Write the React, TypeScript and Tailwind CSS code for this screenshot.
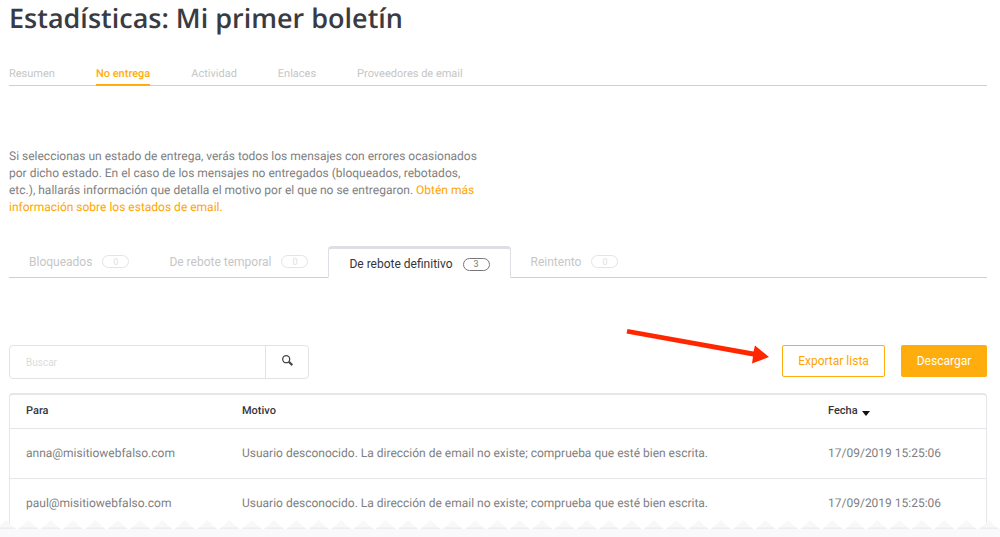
import { ReactNode } from "react";

const sections = ["Resumen", "No entrega", "Actividad", "Enlaces", "Proveedores de email"];

const states = [
  { label: "Bloqueados", count: 0 },
  { label: "De rebote temporal", count: 0 },
  { label: "De rebote definitivo", count: 3 },
  { label: "Reintento", count: 0 },
];

const reason = "Usuario desconocido. La dirección de email no existe; comprueba que esté bien escrita.";

const rows = [
  { email: "anna@misitiowebfalso.com", reason, date: "17/09/2019 15:25:06" },
  { email: "paul@misitiowebfalso.com", reason, date: "17/09/2019 15:25:06" },
];

function SectionNav() {
  return (
    <nav className="mt-7 flex h-[22px] gap-[41px] border-b border-[#cfcfcf] text-[11px] leading-5">
      {sections.map((name) => (
        <a
          key={name}
          href="#"
          className={
            name === "No entrega"
              ? "-mb-px border-b-2 border-[#fead0d] font-medium text-[#fead0d]"
              : "text-[#c6c6c6]"
          }
        >
          {name}
        </a>
      ))}
    </nav>
  );
}

function StateTab({ label, count }: { label: string; count: number }) {
  const active = count > 0;
  return (
    <button
      type="button"
      role="tab"
      aria-selected={active}
      className={
        active
          ? "-mb-px flex h-8 items-center gap-2.5 rounded-t-sm border border-t-3 border-[#dedee5] border-b-white bg-white px-5 pt-0.5 text-[#33343c]"
          : "flex h-[31px] items-center gap-2.5 px-5 text-[#c6c6c6]"
      }
    >
      {label}
      <span
        className={
          active
            ? "flex h-[13px] w-[27px] items-center justify-center rounded-full border border-[#777] text-[9px] text-[#777]"
            : "flex h-[13px] w-[27px] items-center justify-center rounded-full border border-[#e4e4e8] text-[9px] text-[#e0e0e4]"
        }
      >
        {count}
      </span>
    </button>
  );
}

function SearchBox() {
  return (
    <form className="flex h-[34px] w-[300px] rounded-sm border border-[#e3e3e7]" onSubmit={(e) => e.preventDefault()}>
      <input
        type="search"
        aria-label="Buscar"
        placeholder="Buscar"
        className="min-w-0 flex-1 px-4 text-[10px] outline-none placeholder:text-[#dcdcdc]"
      />
      <button
        type="submit"
        aria-label="Buscar mensajes"
        className="flex w-[43px] items-center justify-center border-l border-[#e3e3e7] pb-1"
      >
        <svg width="11" height="11" viewBox="0 0 11 11" fill="none" stroke="#444">
          <circle cx="4.2" cy="4.2" r="3.5" strokeWidth="1.3" />
          <path d="M6.8 6.8 10.3 10.1" strokeWidth="2.2" />
        </svg>
      </button>
    </form>
  );
}

function HeadCell({ children }: { children: ReactNode }) {
  return <th className="px-4 text-left text-[11px] font-medium text-[#33343c]">{children}</th>;
}

function MessageTable() {
  return (
    <div className="mt-[14px] rounded-t-sm border border-t-2 border-b-0 border-[#e6e6ea]">
      <table className="w-full table-fixed border-collapse">
        <colgroup>
          <col className="w-[216px]" />
          <col />
          <col className="w-[174px]" />
        </colgroup>
        <thead>
          <tr className="h-[33px] border-b border-[#e6e6ea]">
            <HeadCell>Para</HeadCell>
            <HeadCell>Motivo</HeadCell>
            <HeadCell>
              <button type="button" className="flex items-center gap-1">
                Fecha
                <svg width="8" height="5" viewBox="0 0 8 5" className="mt-1">
                  <path d="M0 0h8L4 5z" fill="#111" />
                </svg>
              </button>
            </HeadCell>
          </tr>
        </thead>
        <tbody className="text-xs text-[#808080]">
          {rows.map((row) => (
            <tr key={row.email} className="h-[50px] border-b border-[#e6e6ea] last:border-0">
              <td className="px-4">{row.email}</td>
              <td className="px-4">{row.reason}</td>
              <td className="px-4">{row.date}</td>
            </tr>
          ))}
        </tbody>
      </table>
    </div>
  );
}

// Torn paper edge that closes the list
function TornEdge() {
  return (
    <svg className="relative -mt-2 block h-[17px] w-full" aria-hidden="true">
      <defs>
        <pattern id="teeth" x="-5" width="22.34" height="17" patternUnits="userSpaceOnUse">
          <path d="M11 0 20.5 9h-19z" fill="#f8f8fb" />
          <path d="M2.500 7.500h17l1.500 1.500h-20z" fill="#eeeef1" />
          <path d="M0 9h22.340v8H0z" fill="#f9f9fc" />
        </pattern>
      </defs>
      <rect width="100%" height="17" fill="url(#teeth)" />
    </svg>
  );
}

export default function App() {
  return (
    <div className="bg-white font-[Roboto,'Liberation_Sans',sans-serif] [text-rendering:geometricPrecision]">
      <main className="pr-[13px] pl-[9px]">
        <h1 className="font-['Open_Sans','Noto_Sans',sans-serif] text-[27px] leading-9 font-semibold text-[#3a3b42]">
          Estadísticas: Mi primer boletín
        </h1>
        <SectionNav />

        <p className="mt-[62px] w-[472px] text-xs leading-[17px] text-[#808080]">
          Si seleccionas un estado de entrega, verás todos los mensajes con errores ocasionados por dicho estado. En el
          caso de los mensajes no entregados (bloqueados, rebotados, etc.), hallarás información que detalla el motivo
          por el que no se entregaron.{" "}
          <a href="#" className="text-[#fea500]">
            Obtén más información sobre los estados de email.
          </a>
        </p>

        <div role="tablist" className="mt-[30px] flex items-end border-b border-[#cfcfcf] text-xs">
          {states.map((state) => (
            <StateTab key={state.label} {...state} />
          ))}
        </div>

        <div className="mt-[67px] flex items-start">
          <SearchBox />
          <div className="relative ml-auto flex gap-4">
            <svg
              className="absolute -top-4 right-[218px]"
              width="143"
              height="36"
              viewBox="0 0 143 36"
              fill="#ff2600"
              aria-hidden="true"
            >
              <path d="M1.500 0 127.500 22.500 129 16.500 143 28 126 34.500 127 27.500 .5 4.500z" />
            </svg>
            <button
              type="button"
              className="h-8 w-[103px] rounded-xs border border-[#fead0d] text-xs text-[#fea500]"
            >
              Exportar lista
            </button>
            <button type="button" className="h-8 w-[86px] rounded-xs bg-[#fead0d] text-xs text-white">
              Descargar
            </button>
          </div>
        </div>

        <MessageTable />
      </main>
      <TornEdge />
    </div>
  );
}
